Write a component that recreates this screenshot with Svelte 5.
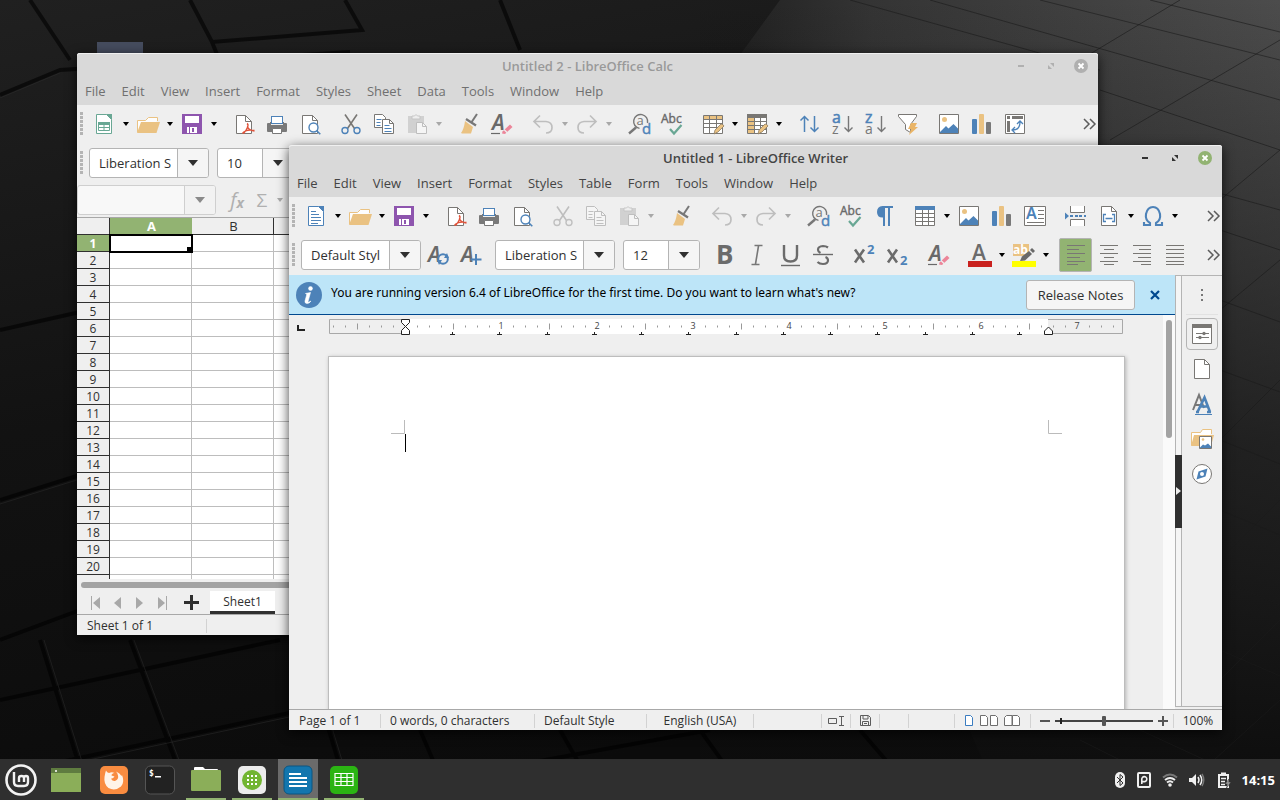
<script lang="ts">
  type Tool = { icon: string; label: string; drop?: boolean; off?: boolean; sep?: boolean; on?: boolean };

  const calcMenu = ['File', 'Edit', 'View', 'Insert', 'Format', 'Styles', 'Sheet', 'Data', 'Tools', 'Window', 'Help'];
  const writerMenu = ['File', 'Edit', 'View', 'Insert', 'Format', 'Styles', 'Table', 'Form', 'Tools', 'Window', 'Help'];

  const calcTools: Tool[] = [
    { icon: 'sheet', label: 'New', drop: true },
    { icon: 'open', label: 'Open', drop: true },
    { icon: 'save', label: 'Save', drop: true },
    { icon: 'pdf', label: 'Export as PDF', sep: true },
    { icon: 'print', label: 'Print' },
    { icon: 'preview', label: 'Print Preview' },
    { icon: 'cut', label: 'Cut', sep: true },
    { icon: 'copy', label: 'Copy' },
    { icon: 'paste', label: 'Paste', drop: true, off: true },
    { icon: 'clone', label: 'Clone Formatting', sep: true },
    { icon: 'clear', label: 'Clear Formatting' },
    { icon: 'undo', label: 'Undo', drop: true, off: true, sep: true },
    { icon: 'redo', label: 'Redo', drop: true, off: true },
    { icon: 'find', label: 'Find & Replace', sep: true },
    { icon: 'spell', label: 'Spelling' },
    { icon: 'rows', label: 'Row', drop: true, sep: true },
    { icon: 'cols', label: 'Column', drop: true },
    { icon: 'sort', label: 'Sort', sep: true },
    { icon: 'sortaz', label: 'Sort Ascending' },
    { icon: 'sortza', label: 'Sort Descending' },
    { icon: 'filter', label: 'AutoFilter' },
    { icon: 'image', label: 'Insert Image', sep: true },
    { icon: 'chart', label: 'Insert Chart' },
    { icon: 'pivot', label: 'Pivot Table' }
  ];

  const writerTools: Tool[] = [
    { icon: 'doc', label: 'New', drop: true },
    { icon: 'open', label: 'Open', drop: true },
    { icon: 'save', label: 'Save', drop: true },
    { icon: 'pdf', label: 'Export as PDF', sep: true },
    { icon: 'print', label: 'Print' },
    { icon: 'preview', label: 'Print Preview' },
    { icon: 'cut', label: 'Cut', off: true, sep: true },
    { icon: 'copy', label: 'Copy', off: true },
    { icon: 'paste', label: 'Paste', drop: true, off: true },
    { icon: 'clone', label: 'Clone Formatting', sep: true },
    { icon: 'undo', label: 'Undo', drop: true, off: true, sep: true },
    { icon: 'redo', label: 'Redo', drop: true, off: true },
    { icon: 'find', label: 'Find & Replace', sep: true },
    { icon: 'spell', label: 'Spelling' },
    { icon: 'pilcrow', label: 'Formatting Marks' },
    { icon: 'table', label: 'Insert Table', drop: true, sep: true },
    { icon: 'image', label: 'Insert Image' },
    { icon: 'chart', label: 'Insert Chart' },
    { icon: 'textbox', label: 'Insert Text Box' },
    { icon: 'break', label: 'Insert Page Break', sep: true },
    { icon: 'field', label: 'Insert Field', drop: true },
    { icon: 'omega', label: 'Insert Special Character', drop: true }
  ];

  const styleTools: Tool[] = [
    { icon: 'updatestyle', label: 'Update Style' },
    { icon: 'newstyle', label: 'New Style' }
  ];

  const formatTools: Tool[] = [
    { icon: 'bold', label: 'Bold', sep: true },
    { icon: 'italic', label: 'Italic' },
    { icon: 'underline', label: 'Underline' },
    { icon: 'strike', label: 'Strikethrough' },
    { icon: 'super', label: 'Superscript', sep: true },
    { icon: 'sub', label: 'Subscript' },
    { icon: 'clear', label: 'Clear Formatting', sep: true },
    { icon: 'color', label: 'Font Color', drop: true, sep: true },
    { icon: 'highlight', label: 'Highlighting', drop: true },
    { icon: 'left', label: 'Align Left', sep: true, on: true },
    { icon: 'center', label: 'Center' },
    { icon: 'right', label: 'Align Right' },
    { icon: 'justify', label: 'Justified' }
  ];

  const columns = 'ABCDEFGHIJ'.split('');
  const rows = Array.from({ length: 21 }, (_, i) => i + 1);

  // ruler: 96px to the inch, a tick every 12px
  const ticks: { x: number; h: number }[] = [];
  for (let i = -6; i <= 59; i++) {
    if (i % 8 === 0) continue;
    ticks.push({ x: 76 + i * 12, h: i % 4 === 0 ? 6 : 2 });
  }
  const tabs = Array.from({ length: 13 }, (_, i) => Math.round(124 + i * 47.25));

  const side = [
    { icon: 'props', label: 'Properties', on: true },
    { icon: 'page', label: 'Page' },
    { icon: 'styles', label: 'Styles' },
    { icon: 'gallery', label: 'Gallery' },
    { icon: 'navigator', label: 'Navigator' }
  ];

  const apps = [
    { icon: 'firefox', label: 'Firefox' },
    { icon: 'terminal', label: 'Terminal' },
    { icon: 'files', label: 'Files', open: true },
    { icon: 'grid', label: 'Applications', open: true },
    { icon: 'writer', label: 'Writer', open: true, active: true },
    { icon: 'calc', label: 'Calc', open: true }
  ];

  let zoom = $state(50);
</script>

{#snippet icon(name: string)}
  <svg class="icon" viewBox="0 0 24 24" aria-hidden="true">
    {#if name === 'doc'}
      <path d="M4.5 2.5h10l5 5v14h-15z" fill="#fff" stroke="#4d82b8" />
      <path d="M14 2h6v6z" fill="#4d82b8" />
      <path d="M7 7.5h5M7 10.5h8M7 13.5h10M7 16.5h10M7 19.5h7" stroke="#4d82b8" />
    {:else if name === 'sheet'}
      <path d="M4.5 2.5h10l5 5v14h-15z" fill="#fff" stroke="#69a794" />
      <path d="M14 2h6v6z" fill="#69a794" />
      <path d="M6.5 10.5h11v8h-11zM6.5 15.5h11M12 11v8" fill="none" stroke="#69a794" />
      <path d="M6 10h12v3H6z" fill="#69a794" />
    {:else if name === 'open'}
      <path d="M1.5 20V8.500h8l3-3h9V9" fill="#fdfdfd" stroke="#eac282" />
      <path d="M5 10h19l-3.500 11H1z" fill="#eac282" />
    {:else if name === 'save'}
      <path d="M2 2h20v20H2z" fill="#8e55ae" />
      <path d="M5 4h14v7H5zM7 15h10v6H7z" fill="#fff" />
      <path d="M12 16h2v4h-2z" fill="#8e55ae" />
      <path d="M9 15h1v6H9z" fill="#8e55ae" />
    {:else if name === 'pdf'}
      <path d="M4.5 3.5h9l6 6v12h-15z" fill="#fff" stroke="#797774" />
      <path d="M13.5 3.5v6h6" fill="none" stroke="#797774" />
      <path d="M15 11.5c2 1 1 5-3.500 10M15.500 14c0 3 3 4.500 7 5M10.500 21.500c2-3 6-4 12-3" fill="none" stroke="#e0533a" stroke-width="1.400" />
    {:else if name === 'print'}
      <rect x="6.500" y="4.500" width="11" height="7" fill="#fff" stroke="#4d82b8" />
      <path d="M2 12q0-1 1-1h3v2h12v-2h3q1 0 1 1v7q0 1-1 1H3q-1 0-1-1z" fill="#797979" />
      <path d="M5 10h1v3H5zM18 10h1v3h-1z" fill="#797979" />
      <path d="M7.500 16.500h9v5h-9z" fill="#fff" stroke="#797979" />
    {:else if name === 'preview'}
      <path d="M4.500 3.500h10l5 5v13h-15z" fill="#fff" stroke="#797774" />
      <path d="M14.500 3.500v5h5" fill="none" stroke="#797774" />
      <circle cx="15.500" cy="15.500" r="4.500" fill="#fff" stroke="#4d82b8" stroke-width="1.400" />
      <path d="M18.700 18.700l3.600 3.600" stroke="#4d82b8" stroke-width="1.600" />
    {:else if name === 'cut'}
      <path d="M6 2.500l9.500 14M18 2.500L8.500 16.500" stroke="#797774" stroke-width="1.600" fill="none" />
      <circle cx="6" cy="18.500" r="3" fill="none" stroke="#4d82b8" stroke-width="1.400" />
      <circle cx="18" cy="18.500" r="3" fill="none" stroke="#4d82b8" stroke-width="1.400" />
    {:else if name === 'copy'}
      <path d="M2.500 2.500h8l3 3v10h-11z" fill="#fff" stroke="#797774" />
      <path d="M4.500 7.500h5M4.500 10.500h4M4.500 13.500h4" stroke="#4d82b8" />
      <path d="M10.500 7.500h7l4 4v10h-11z" fill="#fff" stroke="#797774" />
      <path d="M17.500 7.500v4h4" fill="none" stroke="#797774" />
      <path d="M12.500 13.500h5M12.500 16.500h7M12.500 19.500h7" stroke="#4d82b8" />
    {:else if name === 'paste'}
      <path d="M3 4h16v17H3z" fill="#a5a5a5" />
      <path d="M7 7V4h2.500q1.500-3 3 0H15v3z" fill="#eee" stroke="#8a8a8a" />
      <path d="M11.500 10.500h6l4 4v7h-10z" fill="#fff" stroke="#777" />
      <path d="M17.500 10.500v4h4" fill="none" stroke="#777" />
    {:else if name === 'clone'}
      <path d="M20 2l-6 9" stroke="#777" stroke-width="2" />
      <path d="M9 7l10 6.500" stroke="#777" stroke-width="2.200" />
      <path d="M8 9l8 6-2 6.500H5L4 21q3-4 4-12z" fill="#eac282" />
    {:else if name === 'clear'}
      <text x="2" y="18" class="glyph" font-size="21" fill="#696969" font-style="italic">A</text>
      <path d="M1 21.500h9" stroke="#696969" stroke-width="1.200" />
      <path d="M12.500 19.500L20 12.500l2.500 2.500-7.500 7-3-.5z" fill="#ec8599" />
      <path d="M14 17.500l3.500 3.500" stroke="#efefef" stroke-width="1.200" />
    {:else if name === 'undo'}
      <path d="M9 3.500L3 9.500l6 6M3 9.500h12q6 .5 6 6t-6 5.500" fill="none" stroke="#777" stroke-width="1.700" />
    {:else if name === 'redo'}
      <path d="M15 3.500l6 6-6 6M21 9.500H9q-6 .5-6 6T9 21" fill="none" stroke="#777" stroke-width="1.700" />
    {:else if name === 'find'}
      <path d="M9 15.500L2 21.500" stroke="#777" stroke-width="2.400" />
      <path d="M20.500 11a7 7 0 1 0-8 5.400" fill="none" stroke="#777" stroke-width="1.400" />
      <text x="9.500" y="13" font-size="13" fill="#777">a</text>
      <text x="15" y="22" font-size="15" fill="#4d82b8" stroke="#4d82b8" stroke-width=".4">d</text>
    {:else if name === 'spell'}
      <text x="1" y="11" font-size="12" fill="#696969" stroke="#696969" stroke-width="0.400">Abc</text>
      <path d="M10 17l4 4.500L21.500 13" fill="none" stroke="#69a794" stroke-width="2.200" />
    {:else if name === 'pilcrow'}
      <path d="M21 2H10.500Q5 2.500 5 8t5.500 5.500h.5V22h2V4h3v18h2V4h3z" fill="#4d82b8" />
    {:else if name === 'table'}
      <path d="M2.500 2.500h19v19h-19zM2.500 9.500h19M2.500 13.500h19M2.500 17.500h19M9.500 6v15M15.500 6v15" fill="#fff" stroke="#797774" />
      <path d="M2 2h20v4H2z" fill="#4d82b8" />
    {:else if name === 'rows'}
      <path d="M2.500 3.500h19v18h-19zM2.500 7.500h19M2.500 11.500h19M2.500 15.500h19M8.500 3v19M15.500 3v19" fill="#fff" stroke="#797774" />
      <path d="M3 4h5v3H3zM9 4h6v3H9zM16 4h5v3h-5z" fill="#eac282" />
      <path d="M13 22l1-4 6-6q2 0 3 2l-6 6z" fill="#eac282" stroke="#8b7b62" stroke-width=".8" />
    {:else if name === 'cols'}
      <path d="M2.500 2.500h19v19h-19zM2.500 9.500h19M2.500 13.500h19M2.500 17.500h19M9.500 6v15M15.500 6v15" fill="#fff" stroke="#797774" />
      <path d="M2 2h20v4H2z" fill="#797774" />
      <path d="M3 6h6v3H3zM3 10h6v3H3zM3 14h6v3H3zM3 18h6v3H3z" fill="#eac282" />
      <path d="M13 22l1-4 6-6q2 0 3 2l-6 6z" fill="#eac282" stroke="#8b7b62" stroke-width=".8" />
    {:else if name === 'sort'}
      <path d="M7.500 20V4M3.500 8.500l4-4 4 4M17.500 4v16M13.500 15.500l4 4 4-4" fill="none" stroke="#4d82b8" stroke-width="1.500" />
    {:else if name === 'sortaz' || name === 'sortza'}
      <text x="2" y="11" font-size="16" fill="#4d82b8" stroke="#4d82b8" stroke-width=".5">{name === 'sortaz' ? 'a' : 'z'}</text>
      <text x="2" y="22" font-size="14" fill="#777">{name === 'sortaz' ? 'z' : 'a'}</text>
      <path d="M18.500 4v16M14.500 15.500l4 4 4-4" fill="none" stroke="#777" stroke-width="1.400" />
    {:else if name === 'filter'}
      <path d="M2.500 2.500h18v2l-6 8v8l-5-3v-5l-7-8z" fill="#fff" stroke="#797774" />
      <path d="M15 11h6l-2 4h3l-9 8 2-6h-3z" fill="#eab567" />
    {:else if name === 'image'}
      <path d="M2.500 2.500h19v19h-19z" fill="#fff" stroke="#797774" />
      <circle cx="7.500" cy="7.500" r="2.500" fill="#eac282" />
      <path d="M3 20l6-6 2.500 2.500 5-4.500 4.500 4.500V21H3z" fill="#4d82b8" />
    {:else if name === 'chart'}
      <rect x="2" y="7" width="5" height="15" rx="1" fill="#4d82b8" />
      <rect x="9" y="2" width="5" height="20" rx="1" fill="#eac282" />
      <rect x="16" y="10" width="5" height="12" rx="1" fill="#797979" />
    {:else if name === 'pivot'}
      <path d="M2.500 2.500h19v19h-19z" fill="#fff" stroke="#797774" />
      <path d="M4 4h3v3H4zM9 4h11v3H9zM4 9h3v11H4z" fill="#797774" />
      <path d="M10 18q7 0 7-8M14 12l3-3 3 3M12 15l-3 3 3 3" fill="none" stroke="#4d82b8" stroke-width="1.300" />
    {:else if name === 'textbox'}
      <path d="M1.500 2.500h21v19h-21z" fill="#fff" stroke="#797774" />
      <text x="3" y="15" class="glyph" font-size="16" fill="#4d82b8">A</text>
      <path d="M15 6.500h6M15 10.500h6M15 14.500h6M4 18.500h17" stroke="#797774" />
    {:else if name === 'break'}
      <path d="M6.500 2v6.500h14V2M6.500 22v-6.500h14V22" fill="#fff" stroke="#797774" />
      <path d="M1 8.500l4 3.500-4 3.500zM6 11h3v2H6zM11 11h3v2h-3zM15 11h3v2h-3zM20 11h2v2h-2z" fill="#4d82b8" />
    {:else if name === 'field'}
      <path d="M4.500 2.500h10l5 5v14h-15z" fill="#fff" stroke="#797774" />
      <path d="M14.500 2.500v5h5" fill="none" stroke="#797774" />
      <path d="M9 10.500H6.500v7H9M15 10.500h2.500v7H15M8.500 14.500h7" fill="none" stroke="#4d82b8" stroke-width="1.300" />
    {:else if name === 'omega'}
      <path d="M3 18v3h6v-2q-5-3-4-9 1.500-7 7-7t7 7q1 6-4 9v2h6v-3" fill="none" stroke="#4d82b8" stroke-width="2.100" />
    {:else if name === 'updatestyle'}
      <text x="2" y="19" class="glyph" font-size="21" fill="#696969" font-style="italic">A</text>
      <circle cx="17" cy="16" r="4.800" fill="#efefef" stroke="#4d82b8" stroke-width="2" />
      <path d="M21 10l2 5h-5zM13 22l-2-5h5z" fill="#4d82b8" />
    {:else if name === 'newstyle'}
      <text x="2" y="19" class="glyph" font-size="21" fill="#696969" font-style="italic">A</text>
      <path d="M17 11v11M11.500 16.500h11" stroke="#4d82b8" stroke-width="2" />
    {:else if name === 'bold'}
      <text x="3" y="21" font-size="26" font-weight="700" fill="#6b6b6b">B</text>
    {:else if name === 'italic'}
      <path d="M8.500 2.500h8M5.500 21.500h8M12.500 3l-3 18" stroke="#777" stroke-width="1.600" />
    {:else if name === 'underline'}
      <path d="M5 2v10.500q0 6 6.500 6t6.500-6V2" fill="none" stroke="#6b6b6b" stroke-width="2.400" />
      <path d="M2 22.500h19" stroke="#6b6b6b" stroke-width="1.400" />
    {:else if name === 'strike'}
      <path d="M16 4.500q-2-1.500-5-1.500-5 .3-5 3.700 0 2 2.500 3.300M13.500 14q2.500 1 2.500 3.300Q16 21 11 21q-3.500 0-5.500-2" fill="none" stroke="#6b6b6b" stroke-width="2.200" />
      <path d="M1 11.500h20" stroke="#6b6b6b" stroke-width="1.400" />
    {:else if name === 'super'}
      <path d="M2 6.500l9 13M11 6.500L2 19.500" stroke="#6b6b6b" stroke-width="2.600" />
      <text x="14" y="11" font-size="13" font-weight="700" fill="#4d82b8">2</text>
    {:else if name === 'sub'}
      <path d="M2 6.500l9 13M11 6.500L2 19.500" stroke="#6b6b6b" stroke-width="2.600" />
      <text x="14" y="22" font-size="13" font-weight="700" fill="#4d82b8">2</text>
    {:else if name === 'color'}
      <text x="4" y="17" font-size="21" font-weight="600" fill="#6b6b6b">A</text>
      <path d="M0 18h24v6H0z" fill="#c9211e" />
    {:else if name === 'highlight'}
      <path d="M1 1h16v12H1z" fill="#eac282" />
      <text x="1" y="11" font-size="12" font-weight="700" fill="#fff">ab</text>
      <path d="M8 18l2-4.500 7-5.500 3 3-7 6.500z" fill="#696969" />
      <path d="M18 7l2-2 3 3-2 2z" fill="#696969" />
      <path d="M0 18h24v6H0z" fill="#ff0" />
    {:else if name === 'left'}
      <path d="M3 2.500h18M3 6.500h12M3 10.500h18M3 14.500h13M3 18.500h18M3 21.500h11" stroke="#797774" />
    {:else if name === 'center'}
      <path d="M3 2.500h18M7 6.500h10M3 10.500h18M7 14.500h10M3 18.500h18M7 21.500h10" stroke="#797774" />
    {:else if name === 'right'}
      <path d="M3 2.500h18M9 6.500h12M3 10.500h18M8 14.500h13M3 18.500h18M11 21.500h10" stroke="#797774" />
    {:else if name === 'justify'}
      <path d="M3 2.500h18M3 6.500h18M3 10.500h18M3 14.500h18M3 18.500h18M3 21.500h18" stroke="#797774" />
    {:else if name === 'props'}
      <path d="M2.500 2.500h19v19h-19z" fill="#fff" stroke="#797774" />
      <path d="M2 2h20v4H2z" fill="#797774" />
      <path d="M6 11.500h13M6 15.500h13" stroke="#797774" />
      <circle cx="14" cy="11.500" r="1.700" fill="#797774" /><circle cx="10" cy="15.500" r="1.700" fill="#797774" />
    {:else if name === 'page'}
      <path d="M4.500 2.500h10l5 5v14h-15z" fill="#fff" stroke="#797774" />
      <path d="M14.500 2.500v5h5" fill="none" stroke="#797774" />
    {:else if name === 'styles'}
      <path d="M3 18L9 3l5 13M5.500 13h7" fill="none" stroke="#777" stroke-width="2" />
      <path d="M7.500 20L14.500 5.500 20 20M10 14.500h8M6 20h3M17 20h4" fill="none" stroke="#4d82b8" stroke-width="2.600" />
      <path d="M5 22.500h17" stroke="#4d82b8" />
    {:else if name === 'gallery'}
      <path d="M1.500 18V5.500h9l2-3h9V7" fill="#fff" stroke="#eac282" />
      <path d="M4 8h20l-3 11H1z" fill="#eac282" />
      <path d="M9.500 9.500h12v12h-12z" fill="#fff" stroke="#797774" />
      <circle cx="13" cy="12.500" r="1.300" fill="#eac282" />
      <path d="M10 20.500l3-3 2 1 3-2 3 3V21H10z" fill="#4d82b8" />
    {:else if name === 'navigator'}
      <circle cx="12" cy="12" r="9.500" fill="#fff" stroke="#797774" />
      <path d="M17.500 6.500l-2 8-9 3 2-8z" fill="#4d82b8" />
      <circle cx="12" cy="12" r="2" fill="#fff" />
    {/if}
  </svg>
{/snippet}

{#snippet arrow()}
  <svg class="arrow" width="6" height="4" viewBox="0 0 6 4" aria-hidden="true"><path d="M0 0h6L3 4z" fill="currentColor" /></svg>
{/snippet}

{#snippet tools(list: Tool[])}
  {#each list as t}
    <button class="tool" class:sep={t.sep} class:on={t.on} class:off={t.off} aria-label={t.label} disabled={t.off}>{@render icon(t.icon)}</button>
    {#if t.drop}
      <button class="drop" class:off={t.off} aria-label="{t.label} options" disabled={t.off}>{@render arrow()}</button>
    {/if}
  {/each}
{/snippet}

{#snippet more()}
  <button class="more" aria-label="More">
    <svg width="13" height="12" viewBox="0 0 13 12" aria-hidden="true"><path d="M1 1l5 5-5 5M7 1l5 5-5 5" fill="none" stroke="#5c5c5c" stroke-width="1.500" /></svg>
  </button>
{/snippet}

{#snippet combo(label: string, value: string, size: string, off: boolean)}
  <label class="combo {size}" class:off>
    <select aria-label={label} disabled={off}><option>{value}</option></select>
    <span class="chev"><svg width="10" height="6" viewBox="0 0 10 6" aria-hidden="true"><path d="M0 0h10L5 6z" fill="currentColor" /></svg></span>
  </label>
{/snippet}

{#snippet frame(title: string, menu: string[])}
  <header>
    <div class="titlebar">
      <h1>{title}</h1>
      <div class="controls">
        <button aria-label="Minimize"><svg width="14" height="14" viewBox="0 0 14 14"><path d="M4 6h6v2H4z" fill="currentColor" /></svg></button>
        <button aria-label="Maximize"><svg width="14" height="14" viewBox="0 0 14 14"><path d="M6 4h4v4zM4 6v4h4z" fill="currentColor" /></svg></button>
        <button aria-label="Close"><svg width="14" height="14" viewBox="0 0 14 14"><circle class="dot" cx="7" cy="7" r="7" /><path d="M4.500 4.500l5 5M9.500 4.500l-5 5" stroke="#fff" stroke-width="1.800" /></svg></button>
      </div>
    </div>
    <nav class="menu">
      {#each menu as m}<button>{m}</button>{/each}
    </nav>
  </header>
{/snippet}

<div class="desktop">
  <svg class="wallpaper" viewBox="0 0 1280 800" preserveAspectRatio="none" aria-hidden="true">
    <defs>
      <linearGradient id="base" x1="0" y1="0" x2="0.300" y2="1">
        <stop offset="0" stop-color="#202020" /><stop offset="0.500" stop-color="#121212" /><stop offset="1" stop-color="#0b0b0b" />
      </linearGradient>
      <linearGradient id="light" x1="0" y1="0.100" x2="1" y2="0">
        <stop offset="0" stop-color="#1c1c1c" /><stop offset="0.300" stop-color="#343434" /><stop offset="1" stop-color="#4c4c4c" />
      </linearGradient>
      <linearGradient id="fade" x1="0" y1="0" x2="0" y2="1">
        <stop offset="0" stop-color="#101010" stop-opacity="0" /><stop offset="0.550" stop-color="#101010" stop-opacity="0.700" /><stop offset="1" stop-color="#0c0c0c" />
      </linearGradient>
    </defs>
    <path d="M0 0h1280v800H0z" fill="url(#base)" />
    <path d="M780 0h500v800H1000L700 110z" fill="url(#light)" />
    <path d="M700 0h580v800H700z" fill="url(#fade)" />
    <path d="M0 95l60-25 290-18M30 0l40 60M190 0l22 42 150-12L345 0M212 42l8 20M500 0l20 50M0 330l80-18M0 500l80-25M0 640l80-30M40 640l50 160M0 700l280-60M130 640l60 160M300 635l50 165M0 775l420-90M420 730l30 70M560 730l40 70M380 790l330-60M700 730l50 70M860 730l60 70" fill="none" stroke="#000" stroke-width="4" opacity=".6" />
    <path d="M0 98l60-25M0 504l80-25M44 640l50 160M134 640l60 160M304 635l50 165M0 779l420-90" fill="none" stroke="#2d2d2d" opacity=".5" />
    <path d="M850 0l250 70M930 0l350 100M1040 0l240 60M1150 0l130 32M1100 90l180 60M1100 160l180 50M1220 230l60 20M1220 300l60 22M1220 370l60 22M1220 440l60 24M1220 510l60 25M1220 580l60 25M1220 650l60 26M1080 740l120 60M1140 730l130 60M1180 0L1080 60M1280 40L1110 140M1280 150l-60 50M1280 260l-60 50M1280 380l-60 60M1280 500l-60 60M1280 620l-60 60M1280 700l-110 100" fill="none" stroke="#1b1b1b" opacity=".6" />
  </svg>
  <span class="shortcut"></span>

  <section class="window calc">
    {@render frame('Untitled 2 - LibreOffice Calc', calcMenu)}
    <div class="toolbar"><i class="grip"></i>{@render tools(calcTools)}{@render more()}</div>
    <div class="toolbar"><i class="grip"></i>{@render combo('Font name', 'Liberation S', 'wide', false)}{@render combo('Font size', '10', 'narrow', false)}</div>
    <div class="formulabar">
      {@render combo('Name Box', '', 'name', true)}
      <button class="fx" aria-label="Function Wizard" disabled><i>f</i><b>x</b></button>
      <button class="sum" aria-label="Select Function" disabled>Σ</button>
      <button class="drop off" aria-label="Function list" disabled>{@render arrow()}</button>
    </div>
    <div class="grid">
      <table>
        <thead>
          <tr><th class="corner"></th>{#each columns as c, i}<th class:sel={i === 0}>{c}</th>{/each}</tr>
        </thead>
        <tbody>
          {#each rows as r}
            <tr><th class:sel={r === 1}>{r}</th>{#each columns as c, i}<td class:cur={r === 1 && i === 0}></td>{/each}</tr>
          {/each}
        </tbody>
      </table>
    </div>
    <div class="hscroll"><span></span></div>
    <div class="sheets">
      <button aria-label="First sheet"><svg width="10" height="14" viewBox="0 0 10 14"><path d="M0 0h1v14H0zM9 1v12L2 7z" fill="#a8a8a8" /></svg></button>
      <button aria-label="Previous sheet"><svg width="10" height="14" viewBox="0 0 10 14"><path d="M8 1v12L1 7z" fill="#a8a8a8" /></svg></button>
      <button aria-label="Next sheet"><svg width="10" height="14" viewBox="0 0 10 14"><path d="M1 1v12l7-6z" fill="#a8a8a8" /></svg></button>
      <button aria-label="Last sheet"><svg width="10" height="14" viewBox="0 0 10 14"><path d="M9 0h1v14H9zM1 1v12l7-6z" fill="#a8a8a8" /></svg></button>
      <button class="add" aria-label="Add sheet"><svg width="15" height="15" viewBox="0 0 15 15"><path d="M6 0h3v6h6v3H9v6H6V9H0V6h6z" fill="#2f2f2f" /></svg></button>
      <button class="tab">Sheet1</button>
    </div>
    <footer><span class="cell count">Sheet 1 of 1</span></footer>
  </section>

  <section class="window writer">
    {@render frame('Untitled 1 - LibreOffice Writer', writerMenu)}
    <div class="toolbar"><i class="grip"></i>{@render tools(writerTools)}{@render more()}</div>
    <div class="toolbar">
      <i class="grip"></i>{@render combo('Paragraph style', 'Default Styl', 'wide', false)}
      {@render tools(styleTools)}
      {@render combo('Font name', 'Liberation S', 'wide', false)}{@render combo('Font size', '12', 'narrow', false)}
      {@render tools(formatTools)}{@render more()}
    </div>
    <div class="body">
      <div class="main">
        <div class="infobar">
          <svg width="26" height="26" viewBox="0 0 26 26" aria-hidden="true">
            <circle cx="13" cy="13" r="13" fill="#4d82b8" />
            <circle cx="14.500" cy="6.500" r="2.200" fill="#fff" />
            <path d="M9.500 11.500l5-1-2.500 9q0 1.500 3-.5-1.500 2.500-4 2.500-2.500-.3-2-2.500l1.800-6.500z" fill="#fff" stroke="#fff" stroke-width=".6" />
          </svg>
          <p>You are running version 6.4 of LibreOffice for the first time. Do you want to learn what's new?</p>
          <button class="notes">Release Notes</button>
          <button class="dismiss" aria-label="Close infobar"><svg width="10" height="10" viewBox="0 0 10 10"><path d="M1 1l8 8M9 1L1 9" stroke="#00488f" stroke-width="2.200" /></svg></button>
        </div>
        <div class="view">
          <div class="canvas">
            <div class="rulerrow">
              <svg class="tabstop" width="8" height="6" viewBox="0 0 8 6" aria-hidden="true"><path d="M0 0h2v4h6v2H0z" fill="#222" /></svg>
              <svg width="796" height="20" viewBox="0 0 796 20" aria-hidden="true">
                <path d="M1.500.5h793v14H1.500z" fill="#efefef" stroke="#a8a8a8" />
                <path d="M77 0h643v15H77z" fill="#fff" />
                {#each ticks as t}
                  <path d="M{t.x + 1.5} {7.5 - t.h / 2}v{t.h}" stroke="#999" />
                {/each}
                {#each [1, 2, 3, 4, 5, 6, 7] as n}
                  <text x={77 + n * 96} y="10" text-anchor="middle" font-size="9" fill="#444">{n}</text>
                {/each}
                {#each tabs as x}
                  <path d="M{x - 2} 15.500h5M{x + 0.5} 13v3" stroke="#222" />
                {/each}
                <path d="M73.500.5h8v3l-4 4-4-4zM73.500 15.500h8v-4l-4-4-4 4zM716.500 15.500h8v-3.500l-4-4-4 4z" fill="#fff" stroke="#222" />
              </svg>
            </div>
            <div class="page">
              <div class="corners">
                <svg width="14" height="14" viewBox="0 0 14 14"><path d="M13.500 0v13.500H0" fill="none" stroke="#bbb" /></svg>
                <svg width="14" height="14" viewBox="0 0 14 14"><path d="M.5 0v13.500H14" fill="none" stroke="#bbb" /></svg>
              </div>
              <div class="line"><span class="caret"></span><textarea aria-label="Document"></textarea></div>
            </div>
          </div>
          <div class="vscroll"><span></span></div>
        </div>
      </div>
      <div class="split"><button aria-label="Hide sidebar"><svg width="5" height="8" viewBox="0 0 5 8"><path d="M0 0l5 4-5 4z" fill="#eee" /></svg></button></div>
      <aside>
        <button class="kebab" aria-label="Sidebar settings"><svg width="3" height="13" viewBox="0 0 3 13"><path d="M0 0h2v2H0zM0 5h2v2H0zM0 10h2v2H0z" fill="#777" /></svg></button>
        {#each side as s}
          <button class="deck" class:on={s.on} aria-label={s.label}>{@render icon(s.icon)}</button>
        {/each}
      </aside>
    </div>
    <footer>
      <span class="cell pages">Page 1 of 1</span>
      <span class="cell words">0 words, 0 characters</span>
      <span class="cell pstyle">Default Style</span>
      <span class="cell lang">English (USA)</span>
      <span class="cell blank"></span>
      <span class="cell small"><svg width="16" height="12" viewBox="0 0 16 12"><path d="M.5 3.500h8v5h-8zM11 1.500h5M11 10.500h5M13.500 1v9" fill="none" stroke="#5c5c5c" /></svg></span>
      <span class="cell small"><svg width="11" height="11" viewBox="0 0 11 11"><path d="M.5.5h8l2 2v8H.500zM3 1v3h5V1M2.500 10V6.500h6V10M4 8.500h3" fill="none" stroke="#5c5c5c" /></svg></span>
      <span class="cell small"></span>
      <span class="cell sig"></span>
      <span class="cell views">
        <button aria-label="Single page"><svg width="9" height="11" viewBox="0 0 9 11"><path d="M.5.5h5l2 2v8h-7z" fill="#fff" stroke="#3a7cc0" /></svg></button>
        <button aria-label="Multiple pages"><svg width="18" height="11" viewBox="0 0 18 11"><path d="M.5.5h5l2 2v8h-7zM10.500.5h5l2 2v8h-7z" fill="#fff" stroke="#6e6e6e" /></svg></button>
        <button aria-label="Book view"><svg width="17" height="11" viewBox="0 0 17 11"><path d="M.5 2.500l2-2h5.500v10H.500zM8.500.5h5l2 2v8h-7z" fill="#fff" stroke="#6e6e6e" /></svg></button>
      </span>
      <span class="cell zoom">
        <button aria-label="Zoom out"><svg width="10" height="10" viewBox="0 0 10 10"><path d="M0 4h10v2H0z" fill="#555" /></svg></button>
        <input type="range" aria-label="Zoom" min="0" max="100" bind:value={zoom} />
        <button aria-label="Zoom in"><svg width="10" height="10" viewBox="0 0 10 10"><path d="M4 0h2v4h4v2H6v4H4V6H0V4h4z" fill="#555" /></svg></button>
      </span>
      <span class="percent">100%</span>
    </footer>
  </section>

  <div class="taskbar">
    <button class="app" aria-label="Menu">
      <svg width="32" height="32" viewBox="0 0 32 32">
        <circle cx="16" cy="16" r="14.500" fill="none" stroke="#f2f2f2" stroke-width="2.600" />
        <path d="M9 8v10q0 4 4 4h6q4 0 4-4v-4q0-2-2-2t-2 2v4M19 14q0-2-2.500-2T14 14v4" fill="none" stroke="#f2f2f2" stroke-width="2.400" />
      </svg>
    </button>
    <button class="app" aria-label="Show Desktop">
      <svg width="30" height="30" viewBox="0 0 30 30"><path d="M0 3h30v24H0z" fill="#8bae59" /><path d="M0 3h30v5H0z" fill="#5f7c40" /><circle cx="5" cy="6" r="1" fill="#fff" /></svg>
    </button>
    <div class="apps">
      {#each apps as a}
        <button class="app" class:running={a.open} class:active={a.active} aria-label={a.label}>
          <svg width="30" height="30" viewBox="0 0 30 30">
            {#if a.icon === 'firefox'}
              <rect x="1" y="1" width="28" height="28" rx="5" fill="#f98c40" />
              <path d="M7 5.500q1 2 3 2.500 3-1.500 5.500 0-3 .5-3 2.500l3 1q-1 2-3.500 2.200 1.500 2.800 4 2.300Q20 14 19 10.500q-.5-2.500-2-4Q21 8 22.500 11l.5-1q3 7-1 11.500-6 5-12.500 1.500-5-4-4-11 .5-4 1.500-6.500z" fill="#fff4e8" />
            {:else if a.icon === 'terminal'}
              <rect x=".5" y="1" width="29" height="28" rx="5" fill="#222" stroke="#555" />
              <text x="4" y="11" font-size="8" font-weight="700" class="mono" fill="#fff">$</text><path d="M10 11h6v1.500h-6z" fill="#fff" />
            {:else if a.icon === 'files'}
              <path d="M3 7V3q0-1 1-1h8l2 2h12q1 0 1 1v3" fill="#fff" /><path d="M0 6q0-1 1-1h28q1 0 1 1v19q0 1-1 1H1q-1 0-1-1z" fill="#8bae59" />
            {:else if a.icon === 'grid'}
              <rect x="1" y="1" width="28" height="28" rx="5" fill="#ececec" /><circle cx="15" cy="15" r="10" fill="#72b531" />
              {#each [10, 14, 18] as y}<path d="M10 {y}h2v2h-2zM14 {y}h2v2h-2zM18 {y}h2v2h-2z" fill="#fff" />{/each}
            {:else if a.icon === 'writer'}
              <rect x="1" y="1" width="28" height="28" rx="5" fill="#1376ae" stroke="#0d5580" />
              <path d="M6 8h12v2H6zM6 12h18v2H6zM6 16h18v2H6zM6 20h18v2H6z" fill="#fff" />
            {:else}
              <rect x="1" y="1" width="28" height="28" rx="5" fill="#2bb413" />
              <path d="M6 8.500h18v12H6zM6 12.500h18M6 16.500h18M12 8v12M18 8v12" fill="none" stroke="#fff" stroke-width="1.200" />
            {/if}
          </svg>
        </button>
      {/each}
    </div>
    <div class="tray">
      <svg width="12" height="16" viewBox="0 0 12 16"><rect x="1" width="10" height="16" rx="5" fill="#f0f0f0" /><path d="M3 5l6 6-3 2.500v-11L9 5l-6 6" fill="none" stroke="#2f2f2f" /></svg>
      <svg width="14" height="16" viewBox="0 0 14 16"><rect x="1" y="1" width="12" height="14" rx="1" fill="none" stroke="#f0f0f0" stroke-width="2" /><path d="M4.800 12V7.300A2.500 2.500 0 1 1 7.300 9.600H5.500" fill="none" stroke="#f0f0f0" stroke-width="1.600" /></svg>
      <svg width="16" height="14" viewBox="0 0 16 14"><path d="M1 4.500q7-6 14 0" fill="none" stroke="#777" stroke-width="2" /><path d="M3 7q5-4 10 0M5 9.500q3-2.500 6 0" fill="none" stroke="#f0f0f0" stroke-width="2" /><circle cx="8" cy="12" r="1.800" fill="#f0f0f0" /></svg>
      <svg width="16" height="14" viewBox="0 0 16 14"><path d="M0 5h3l4-4v12L3 9H0z" fill="#f0f0f0" /><path d="M9 4q2 3 0 6M11 2q3.500 5 0 10" fill="none" stroke="#f0f0f0" stroke-width="1.500" /><path d="M13 1q3.500 6 0 12" fill="none" stroke="#777" stroke-width="1.500" /></svg>
      <svg width="15" height="16" viewBox="0 0 15 16"><path d="M3 3h9v12H3zM5 1.500h5" fill="none" stroke="#f0f0f0" stroke-width="2" /><path d="M5 6.500h5M5 9.500h4M5 12.500h4" stroke="#f0f0f0" stroke-width="1.300" /><path d="M13 7l-4 5h2.500l-1 4 4.500-6h-2.500z" fill="#999" stroke="#2f2f2f" stroke-width=".5" /></svg>
      <time>14:15</time>
    </div>
  </div>
</div>

<style>
  :global(body) {
    background: #0e0e0e;
  }
  .desktop {
    position: relative;
    display: flex;
    flex-direction: column;
    min-height: 100vh;
    overflow: hidden;
    font-family: 'Open Sans', 'Noto Sans', sans-serif;
    font-size: 12px;
    line-height: 16px;
    color: #303030;
  }
  button {
    display: flex;
    align-items: center;
    justify-content: center;
    flex: none;
    margin: 0;
    padding: 0;
    border: 0;
    background: none;
    color: inherit;
    font: inherit;
  }
  svg {
    display: block;
    flex: none;
    overflow: visible;
  }
  .wallpaper {
    position: absolute;
    inset: 0;
    width: 100%;
    height: 100%;
    overflow: hidden;
  }
  .shortcut {
    position: absolute;
    left: 97px;
    top: 42px;
    width: 46px;
    height: 20px;
    background: #454c5e;
  }

  /* windows */
  .window {
    position: absolute;
    display: flex;
    flex-direction: column;
    background: #efefef;
    border-radius: 3px 3px 0 0;
    box-shadow: 0 3px 12px rgba(0, 0, 0, 0.75);
  }
  .calc {
    left: 77px;
    top: 53px;
    width: 1021px;
    height: 582px;
  }
  .writer {
    left: 289px;
    top: 145px;
    width: 933px;
    height: 585px;
  }
  header {
    height: 52px;
    flex: none;
    background: #d9d9d9;
    border-radius: 3px 3px 0 0;
    box-shadow: inset 0 1px 0 #f0f0f0;
  }
  .titlebar {
    display: grid;
    grid-template-columns: 1fr auto 1fr;
    align-items: center;
    height: 26px;
  }
  h1 {
    grid-column: 2;
    margin: 0;
    font-size: 13px;
    font-weight: 600;
    color: #444;
  }
  .controls {
    display: flex;
    justify-content: flex-end;
    gap: 16px;
    padding-right: 10px;
    color: #333;
  }
  .dot {
    fill: #92b372;
  }
  .calc h1 {
    color: #999;
  }
  .calc .controls {
    color: #b0b0b0;
  }
  .calc .dot {
    fill: #b0b0b0;
  }
  .menu {
    display: flex;
    gap: 16px;
    height: 24px;
    padding-left: 8px;
    color: #444;
    font-size: 13px;
  }
  .calc .menu {
    color: #707070;
  }
  .toolbar {
    display: flex;
    align-items: center;
    flex: none;
    box-sizing: border-box;
    height: 39px;
    padding-bottom: 1px;
  }
  .grip {
    width: 3px;
    height: 24px;
    margin: 0 4px 0 3px;
    background: repeating-linear-gradient(#b4b4b4 0 3px, transparent 3px 4px);
  }
  .tool {
    width: 33px;
    height: 34px;
  }
  .tool.sep {
    margin-left: 8px;
  }
  .tool.on {
    box-sizing: border-box;
    background: #92b372;
    border: 1px solid #b4b4b4;
    border-radius: 2px;
  }
  .tool.off {
    opacity: 0.4;
    filter: grayscale(1);
  }
  .icon {
    width: 24px;
    height: 24px;
  }
  .glyph {
    font-family: 'Noto Sans', sans-serif;
    font-weight: 600;
  }
  .mono {
    font-family: 'DejaVu Sans Mono', monospace;
  }
  .drop {
    width: 11px;
    height: 34px;
    color: #000;
  }
  .drop.off {
    color: #a8a8a8;
  }
  .more {
    width: 18px;
    height: 34px;
    margin-left: auto;
  }
  .combo {
    display: flex;
    height: 30px;
    flex: none;
    box-sizing: border-box;
    margin-left: 2px;
    border: 1px solid #b4b4b4;
    border-radius: 3px;
    background: #fff;
    overflow: hidden;
    position: relative;
  }
  .combo.wide {
    width: 120px;
  }
  .combo.narrow {
    width: 77px;
    margin-left: 8px;
  }
  .tool + .combo.wide {
    margin-left: 8px;
  }
  .combo.name {
    width: 139px;
    margin-left: 0;
  }
  .combo select {
    width: 100%;
    padding: 0 31px 0 9px;
    border: 0;
    appearance: none;
    background: none;
    color: #303030;
    font: inherit;
    font-size: 13px;
  }
  .chev {
    position: absolute;
    right: 0;
    top: 0;
    bottom: 0;
    width: 30px;
    display: flex;
    align-items: center;
    justify-content: center;
    border-left: 1px solid #b4b4b4;
    background: #f5f5f5;
    color: #303030;
    pointer-events: none;
  }
  .combo.off {
    background: #f8f8f8;
    border-color: #cfcfcf;
  }
  .combo.off .chev {
    background: #f2f2f2;
    border-color: #cfcfcf;
    color: #8a8a8a;
  }

  /* spreadsheet */
  .formulabar {
    display: flex;
    align-items: center;
    flex: none;
    height: 34px;
    color: #b0b0b0;
  }
  .fx {
    margin-left: 12px;
    width: 18px;
    font-size: 20px;
    line-height: 24px;
  }
  .fx b {
    font-size: 14px;
    font-style: italic;
    padding-top: 6px;
  }
  .sum {
    width: 24px;
    margin-left: 4px;
    font-size: 19px;
    line-height: 24px;
  }
  .grid {
    flex: 1;
    min-height: 0;
    overflow: hidden;
    margin-bottom: 3px;
    background: #fff;
    border-top: 1px solid #a8a8a8;
  }
  table {
    border-collapse: separate;
    border-spacing: 0;
    table-layout: fixed;
    width: 853px;
  }
  th,
  td {
    box-sizing: border-box;
    height: 17px;
    padding: 0;
    border-right: 1px solid #bdbdbd;
    border-bottom: 1px solid #bdbdbd;
    font-weight: 400;
    line-height: 15px;
    text-align: center;
  }
  th {
    background: #efefef;
    border-color: #303030;
  }
  thead th {
    padding-left: 2px;
    font-size: 13px;
  }
  .corner {
    width: 33px;
  }
  .sel {
    background: #92b372;
    color: #fff;
    font-weight: 700;
  }
  thead .sel {
    border-right-color: #92b372;
  }
  .cur {
    outline: 2px solid #000;
    outline-offset: -1px;
    background: linear-gradient(#000, #000) right bottom / 4px 4px no-repeat;
  }
  .hscroll {
    display: flex;
    flex: none;
    height: 6px;
    padding: 0 4px;
  }
  .hscroll span {
    width: 400px;
    border-radius: 3px;
    background: #a3a3a3;
  }
  .sheets {
    display: flex;
    flex: none;
    height: 23px;
    margin-top: 3px;
    padding-left: 8px;
    border-bottom: 1px solid #a8a8a8;
  }
  .sheets button {
    width: 22px;
  }
  .sheets .add {
    width: 37px;
  }
  .sheets .tab {
    width: 65px;
    box-sizing: border-box;
    background: #fff;
    border-bottom: 3px solid #303030;
    padding-top: 2px;
  }

  /* status bars */
  footer {
    display: flex;
    align-items: center;
    flex: none;
    height: 20px;
    padding-top: 1px;
    box-sizing: border-box;
    white-space: nowrap;
  }
  .cell {
    display: flex;
    align-items: center;
    justify-content: center;
    flex: none;
    box-sizing: border-box;
    height: 14px;
    border-right: 1px solid #d2d2d2;
  }
  .count {
    width: 130px;
    padding-left: 10px;
    justify-content: flex-start;
  }
  .pages {
    width: 92px;
    padding-left: 10px;
    justify-content: flex-start;
  }
  .words {
    width: 154px;
    padding-left: 9px;
    justify-content: flex-start;
  }
  .pstyle {
    width: 112px;
    padding-left: 9px;
    justify-content: flex-start;
  }
  .lang {
    width: 107px;
  }
  .blank {
    width: 68px;
  }
  .small {
    width: 29px;
  }
  .sig {
    width: 46px;
  }
  .views {
    width: 76px;
    gap: 6px;
  }
  .zoom {
    flex: 1;
    min-width: 0;
    gap: 5px;
    padding: 0 5px 0 9px;
  }
  .zoom input {
    appearance: none;
    flex: 1;
    min-width: 0;
    height: 12px;
    margin: 0;
    background:
      linear-gradient(#222, #222) 5px center / 2px 6px no-repeat,
      linear-gradient(#444, #444) 0 center / 100% 2px no-repeat;
  }
  .zoom input::-webkit-slider-thumb {
    appearance: none;
    width: 4px;
    height: 10px;
    border-radius: 1px;
    background: #555;
  }
  .percent {
    width: 48px;
    flex: none;
    text-align: center;
  }

  /* document */
  .body {
    display: flex;
    flex: 1;
    min-height: 0;
  }
  .writer footer {
    height: 21px;
    border-top: 1px solid #a8a8a8;
  }
  .main {
    display: flex;
    flex-direction: column;
    flex: 1;
    min-width: 0;
  }
  .infobar {
    display: flex;
    align-items: center;
    flex: none;
    height: 39px;
    padding: 0 15px 0 7px;
    background: #bde5f8;
    border-bottom: 1px solid #00488f;
    color: #000;
  }
  .infobar p {
    flex: 1;
    margin: 0 0 4px 9px;
    font-family: 'Noto Sans', sans-serif;
    white-space: nowrap;
  }
  .notes {
    width: 109px;
    height: 30px;
    border: 1px solid #b4b4b4;
    border-radius: 3px;
    background: #f5f5f5;
    color: #303030;
    font-size: 13px;
  }
  .dismiss {
    margin-left: 15px;
  }
  .view {
    display: flex;
    flex: 1;
    min-height: 0;
  }
  .canvas {
    flex: 1;
    min-width: 0;
    overflow: hidden;
  }
  .rulerrow {
    display: flex;
    justify-content: center;
    position: relative;
    padding: 4px 0 17px;
  }
  .tabstop {
    position: absolute;
    left: 8px;
    top: 10px;
  }
  .page {
    width: 797px;
    height: 1120px;
    box-sizing: border-box;
    margin: 0 auto;
    padding: 63px 62px;
    border: 1px solid #bdbdbd;
    background: #fff;
    box-shadow: 1px 1px 4px rgba(0, 0, 0, 0.25);
  }
  .corners {
    display: flex;
    justify-content: space-between;
  }
  .line {
    display: flex;
    padding: 0 14px;
  }
  .caret {
    width: 1px;
    height: 18px;
    background: #000;
  }
  .line textarea {
    flex: 1;
    height: 200px;
    padding: 0;
    border: 0;
    resize: none;
    background: none;
    font-family: 'Liberation Serif', serif;
    font-size: 16px;
  }
  .vscroll {
    width: 12px;
    background: #fafafa;
  }
  .vscroll span {
    display: block;
    width: 6px;
    height: 118px;
    margin: 5px 3px 0;
    border-radius: 3px;
    background: #a3a3a3;
  }
  .split {
    display: flex;
    align-items: center;
    flex: none;
    width: 5px;
    margin-bottom: 2px;
    border: 1px solid #b4b4b4;
    background: #f5f5f5;
  }
  .split button {
    width: 7px;
    height: 73px;
    margin: 0 -1px;
    background: #303030;
  }
  aside {
    display: flex;
    flex-direction: column;
    align-items: center;
    gap: 3px;
    width: 40px;
    flex: none;
    box-sizing: border-box;
    border-top: 1px solid #b4b4b4;
    border-bottom: 1px solid #b4b4b4;
    margin-bottom: 2px;
  }
  .kebab {
    width: 32px;
    height: 39px;
    border-bottom: 1px solid #e2e2e2;
  }
  .deck {
    width: 32px;
    height: 32px;
    box-sizing: border-box;
  }
  .deck.on {
    border: 1px solid #b4b4b4;
    border-radius: 4px;
  }

  /* panel */
  .taskbar {
    position: relative;
    display: flex;
    align-items: center;
    gap: 5px;
    height: 41px;
    margin-top: auto;
    padding: 0 5px 0 1px;
    background: #2f2f2f;
  }
  .apps {
    display: flex;
    gap: 6px;
    margin-left: 3px;
  }
  .app {
    width: 40px;
    height: 41px;
    box-sizing: border-box;
  }
  .app.running {
    padding-top: 2px;
    border-bottom: 2px solid #92b372;
  }
  .app.active {
    background: #6b6b6b;
  }
  .tray {
    display: flex;
    align-items: center;
    gap: 11px;
    margin-left: auto;
    color: #fff;
  }
  time {
    font-size: 13px;
    font-weight: 700;
  }
</style>
